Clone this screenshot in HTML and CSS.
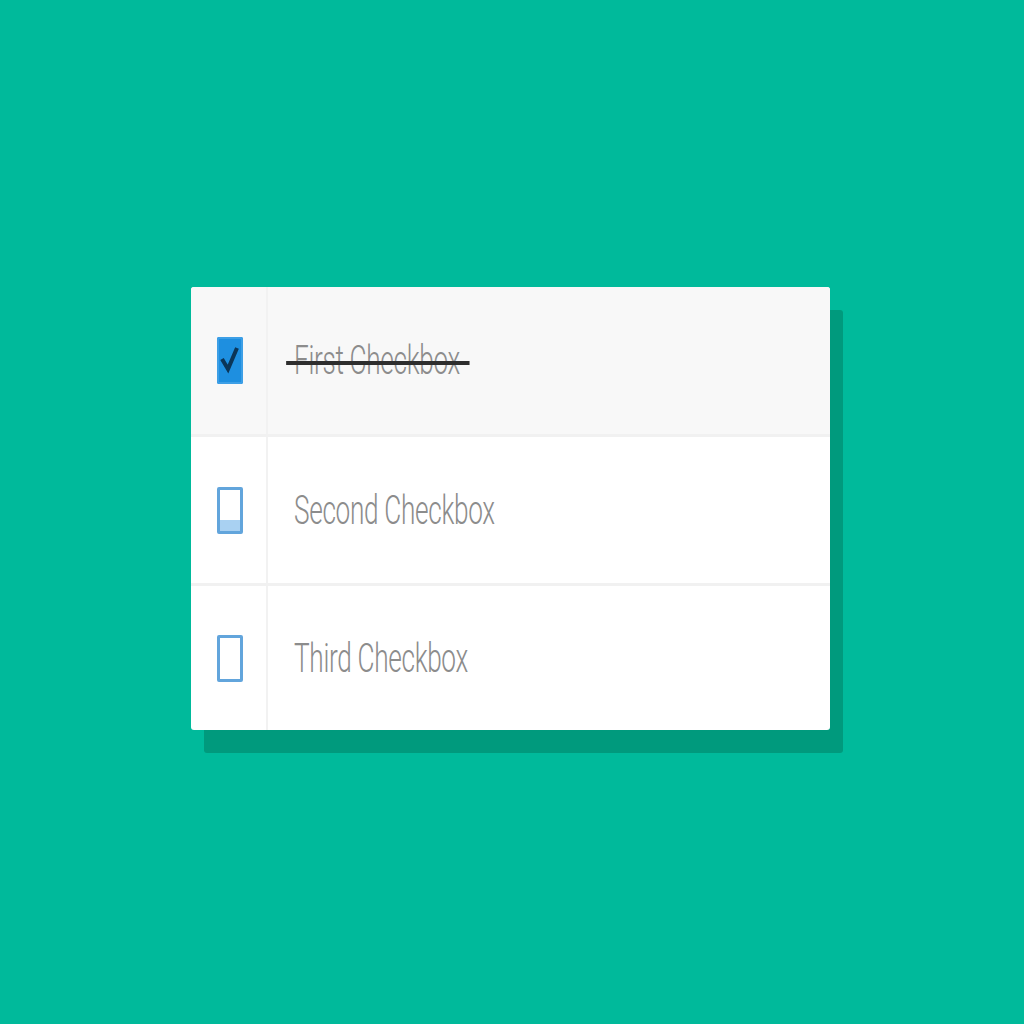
FILE: index.html
```html
<!DOCTYPE html>
<html lang="en">
<head>
<meta charset="utf-8">
<title>Checkbox list</title>
<link rel="stylesheet" href="styles.css">
</head>
<body>
<main class="page">
  <ul class="card">
    <li class="row row-checked">
      <div class="cell-box"><span class="box box-checked"><svg viewBox="0 0 26 46" width="26" height="46"><path d="M5 22 L11 32 L20 11" fill="none" stroke="#0b3557" stroke-width="4"/></svg></span></div>
      <div class="cell-text"><span class="label label-done">First Checkbox</span></div>
    </li>
    <li class="row">
      <div class="cell-box"><span class="box box-hover"></span></div>
      <div class="cell-text"><span class="label">Second Checkbox</span></div>
    </li>
    <li class="row">
      <div class="cell-box"><span class="box"></span></div>
      <div class="cell-text"><span class="label">Third Checkbox</span></div>
    </li>
  </ul>
</main>
</body>
</html>
```
FILE: styles.css
```css
html, body {
  margin: 0;
  padding: 0;
  background: #00ba9b;
}
.page {
  width: 1024px;
  height: 1024px;
  box-sizing: border-box;
  padding: 287px 0 0 191px;
  font-family: Roboto, "Liberation Sans", sans-serif;
}
.card {
  list-style: none;
  margin: 0;
  padding: 0;
  width: 639px;
  height: 443px;
  background: #ffffff;
  border-radius: 3px;
  box-shadow: 13px 23px 0 #009a7d;
  overflow: hidden;
  display: flex;
  flex-direction: column;
}
.row {
  display: flex;
  height: 146px;
  border-bottom: 3px solid #f1f1f1;
}
.row:last-child {
  border-bottom: none;
  flex: 1;
}
.row-checked {
  background: #f8f8f8;
  height: 147px;
}
.cell-box {
  width: 77px;
  flex: none;
  border-right: 2px solid #f2f2f2;
  display: flex;
  align-items: center;
  padding-left: 26px;
  box-sizing: border-box;
}
.box {
  width: 26px;
  height: 47px;
  box-sizing: border-box;
  border: 3px solid #62a5dc;
  border-radius: 2px;
  background: #ffffff;
  display: block;
}
.box-hover {
  background: linear-gradient(to bottom, #ffffff 0, #ffffff 74%, #a9d1f2 74%);
}
.box-checked {
  border: none;
  background: #1e8fe0;
  box-shadow: inset 0 0 0 2px #3d9fe6;
}
.box-checked svg {
  display: block;
}
.cell-text {
  flex: 1;
  display: flex;
  align-items: center;
  padding-left: 26px;
}
.label {
  display: inline-block;
  position: relative;
  font-size: 40px;
  font-weight: 300;
  color: #8c8c8c;
  white-space: nowrap;
  transform: scaleX(0.655);
  transform-origin: left center;
  letter-spacing: -0.5px;
}
.label-done::after {
  content: "";
  position: absolute;
  left: -12px;
  right: -15px;
  top: 52%;
  height: 4px;
  background: #2e2e2e;
}
```
